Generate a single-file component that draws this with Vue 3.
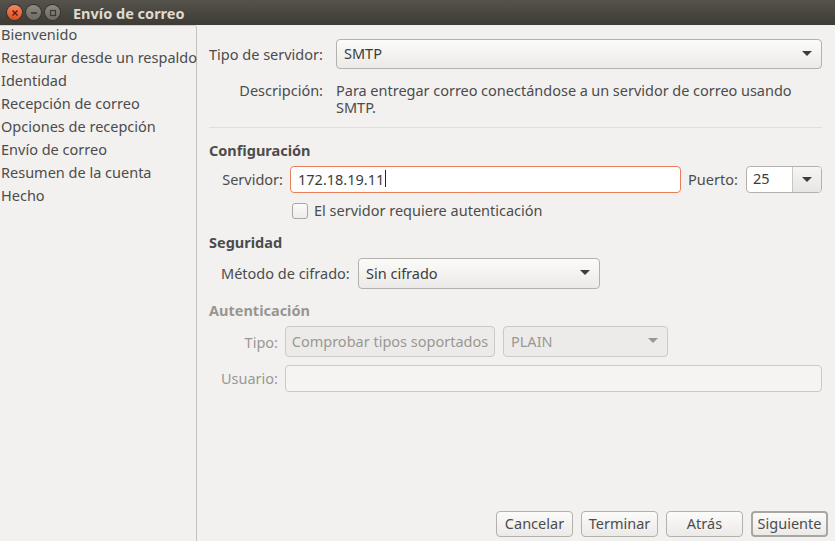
<template>
  <div class="window">
    <header class="titlebar">
      <div class="win-buttons">
        <span class="win-btn close">
          <svg width="8" height="8" viewBox="0 0 8 8"><path d="M1.5 1.5l5 5M6.5 1.5l-5 5" stroke="#5a1a08" stroke-width="1.4" fill="none" /></svg>
        </span>
        <span class="win-btn">
          <svg width="8" height="8" viewBox="0 0 8 8"><path d="M1 4h6" stroke="#3a3833" stroke-width="1.6" fill="none" /></svg>
        </span>
        <span class="win-btn">
          <svg width="8" height="8" viewBox="0 0 8 8"><rect x="1.5" y="1.5" width="5" height="5" stroke="#3a3833" stroke-width="1.2" fill="none" /></svg>
        </span>
      </div>
      <span class="title">Envío de correo</span>
    </header>

    <div class="body">
      <nav class="steps">
        <div v-for="step in steps" :key="step" class="step">{{ step }}</div>
      </nav>

      <main class="content">
        <div class="server-type">
          <span class="type-label">Tipo de servidor:</span>
          <div class="combo combo-wide">
            <span>SMTP</span>
            <span class="arrow"></span>
          </div>
        </div>
        <div class="description">
          <span class="desc-label">Descripción:</span>
          <p class="desc-text">Para entregar correo conectándose a un servidor de correo usando SMTP.</p>
        </div>
        <div class="separator"></div>

        <h3 class="heading">Configuración</h3>
        <div class="server-row">
          <span class="server-label">Servidor:</span>
          <div class="entry focused">172.18.19.11<span class="caret"></span></div>
          <span class="port-label">Puerto:</span>
          <div class="spin">
            <span class="spin-value">25</span>
            <span class="spin-btn"><span class="arrow"></span></span>
          </div>
        </div>
        <label class="check-row">
          <span class="checkbox"></span>
          <span class="check-text">El servidor requiere autenticación</span>
        </label>

        <h3 class="heading security">Seguridad</h3>
        <div class="method-row">
          <span class="method-label">Método de cifrado:</span>
          <div class="combo combo-method">
            <span>Sin cifrado</span>
            <span class="arrow"></span>
          </div>
        </div>

        <div class="auth">
          <h3 class="heading">Autenticación</h3>
          <div class="auth-type">
            <span class="auth-label">Tipo:</span>
            <div class="check-types">Comprobar tipos soportados</div>
            <div class="combo combo-plain">
              <span>PLAIN</span>
              <span class="arrow"></span>
            </div>
          </div>
          <div class="auth-user">
            <span class="auth-label">Usuario:</span>
            <div class="entry disabled"></div>
          </div>
        </div>

        <footer class="actions">
          <button v-for="action in actions" :key="action" class="action" :class="{ primary: action === 'Siguiente' }">{{ action }}</button>
        </footer>
      </main>
    </div>
  </div>
</template>

<script setup>
const steps = [
  'Bienvenido',
  'Restaurar desde un respaldo',
  'Identidad',
  'Recepción de correo',
  'Opciones de recepción',
  'Envío de correo',
  'Resumen de la cuenta',
  'Hecho'
]

const actions = ['Cancelar', 'Terminar', 'Atrás', 'Siguiente']
</script>

<style>
html, body { margin: 0; padding: 0; overflow: hidden; }
</style>

<style scoped>
.window {
  width: 835px;
  height: 541px;
  display: flex;
  flex-direction: column;
  background: #f2f1f0;
  color: #4c4c4c;
  font-family: "Noto Sans", "Open Sans", sans-serif;
  font-size: 14.5px;
  line-height: 20px;
  overflow: hidden;
}
.titlebar {
  height: 25px;
  flex-shrink: 0;
  display: flex;
  align-items: center;
  background: linear-gradient(180deg, #56524b 0%, #3e3b36 100%);
  box-sizing: border-box;
  padding-left: 7px;
}
.win-buttons {
  display: flex;
  gap: 4px;
}
.win-btn {
  width: 15px;
  height: 15px;
  border-radius: 50%;
  display: flex;
  align-items: center;
  justify-content: center;
  background: linear-gradient(180deg, #8e8a82, #6e6a63);
  box-shadow: 0 0 0 1px #35332f;
}
.win-btn.close {
  background: linear-gradient(180deg, #f58a5e, #dd4d22);
}
.title {
  margin-left: 13px;
  color: #dfdbd2;
  font-weight: 700;
  font-size: 14.5px;
}
.body {
  flex: 1;
  display: flex;
  min-height: 0;
}
.steps {
  width: 197px;
  flex-shrink: 0;
  box-sizing: border-box;
  padding: 0 0 0 1px;
  border-right: 1px solid #c4c2bd;
  border-top: 1px solid #d4d2ce;
  border-top-right-radius: 3px;
  white-space: nowrap;
}
.step {
  height: 23px;
  line-height: 17px;
}
.content {
  flex: 1;
  min-width: 0;
  box-sizing: border-box;
  padding: 14px 13px 4px 12px;
  display: flex;
  flex-direction: column;
}
.server-type {
  display: flex;
  align-items: center;
  height: 30px;
}
.type-label {
  width: 127px;
  flex-shrink: 0;
  white-space: nowrap;
}
.combo {
  box-sizing: border-box;
  display: flex;
  align-items: center;
  justify-content: space-between;
  padding: 0 9px 2px 7px;
  border: 1px solid #b3b1ac;
  border-radius: 4px;
  background: linear-gradient(180deg, #fbfbfa, #eceae8);
  color: #3c3c3c;
}
.combo-wide {
  flex: 1;
  height: 30px;
}
.arrow {
  width: 0;
  height: 0;
  border-left: 5px solid transparent;
  border-right: 5px solid transparent;
  border-top: 5px solid #3c3c3c;
}
.description {
  display: flex;
  margin-top: 13px;
}
.desc-label {
  width: 114px;
  margin-right: 13px;
  flex-shrink: 0;
  text-align: right;
  line-height: 17px;
}
.desc-text {
  margin: 0;
  width: 480px;
  line-height: 17px;
  word-spacing: -0.2px;
}
.separator {
  height: 1px;
  margin-top: 11px;
  background: #dededb;
}
.heading {
  margin: 13px 0 0;
  font-size: 14.5px;
  line-height: 18px;
  font-weight: 700;
}
.server-row {
  display: flex;
  align-items: center;
  height: 27px;
  margin-top: 7px;
}
.server-label {
  width: 74px;
  margin-right: 7px;
  flex-shrink: 0;
  text-align: right;
  padding-bottom: 2px;
}
.entry {
  box-sizing: border-box;
  height: 27px;
  border: 1px solid #bdbbb7;
  border-radius: 4px;
  background: #fff;
}
.entry.focused {
  width: 391px;
  padding: 0 0 2px 7px;
  display: flex;
  align-items: center;
  border-color: #e9805a;
  color: #3c3c3c;
}
.caret {
  display: inline-block;
  width: 1px;
  height: 17px;
  background: #222;
  margin-left: 1px;
}
.port-label {
  margin-left: 7px;
  width: 58px;
  flex-shrink: 0;
  padding-bottom: 2px;
}
.spin {
  flex: 1;
  height: 27px;
  box-sizing: border-box;
  display: flex;
  border: 1px solid #b3b1ac;
  border-radius: 4px;
  background: #fff;
  overflow: hidden;
}
.spin-value {
  flex: 1;
  padding-left: 6px;
  line-height: 23px;
  color: #3c3c3c;
}
.spin-btn {
  width: 28px;
  display: flex;
  align-items: center;
  justify-content: center;
  border-left: 1px solid #c9c7c3;
  background: linear-gradient(180deg, #f6f5f4, #e8e6e4);
}
.check-row {
  display: flex;
  align-items: center;
  gap: 6px;
  height: 20px;
  margin: 8px 0 0 83px;
}
.check-text {
  padding-bottom: 2px;
}
.checkbox {
  width: 14px;
  height: 14px;
  border: 1px solid #a9a7a2;
  border-radius: 3px;
  background: linear-gradient(180deg, #fbfbfa, #eeece9);
}
.security {
  margin-top: 12px;
}
.method-row {
  display: flex;
  align-items: center;
  height: 31px;
  margin-top: 7px;
  padding-left: 12px;
}
.method-label {
  width: 137px;
  flex-shrink: 0;
  white-space: nowrap;
  padding-bottom: 2px;
}
.combo-method {
  width: 242px;
  height: 31px;
}
.auth {
  color: #9a9893;
}
.auth .heading {
  margin-top: 12px;
  color: #98968f;
}
.auth-label {
  width: 69px;
  margin-right: 7px;
  flex-shrink: 0;
  text-align: right;
}
.auth-type {
  display: flex;
  align-items: center;
  height: 31px;
  margin-top: 7px;
}
.check-types {
  box-sizing: border-box;
  width: 210px;
  height: 31px;
  line-height: 29px;
  text-align: center;
  white-space: nowrap;
  border: 1px solid #cbc9c5;
  border-radius: 4px;
  background: #ecebe9;
}
.combo-plain {
  width: 165px;
  height: 31px;
  margin-left: 8px;
  background: #ecebe9;
  border-color: #cbc9c5;
  color: #9a9893;
}
.combo-plain .arrow {
  border-top-color: #9a9893;
}
.auth-user {
  display: flex;
  align-items: center;
  height: 27px;
  margin-top: 8px;
}
.auth-user .auth-label {
  padding-bottom: 2px;
}
.entry.disabled {
  flex: 1;
  background: #f5f4f3;
  border-color: #cbc9c5;
}
.actions {
  margin-top: auto;
  display: flex;
  justify-content: flex-end;
  gap: 8px;
  margin-right: -6px;
}
.action {
  box-sizing: border-box;
  width: 77px;
  height: 26px;
  padding: 0 0 2px;
  border: 1px solid #b3b1ac;
  border-radius: 4px;
  background: linear-gradient(180deg, #fbfbfa, #eceae8);
  color: #4c4c4c;
  font: inherit;
  white-space: nowrap;
}
.action.primary {
  border: 2px solid #a8a6a1;
}
</style>
